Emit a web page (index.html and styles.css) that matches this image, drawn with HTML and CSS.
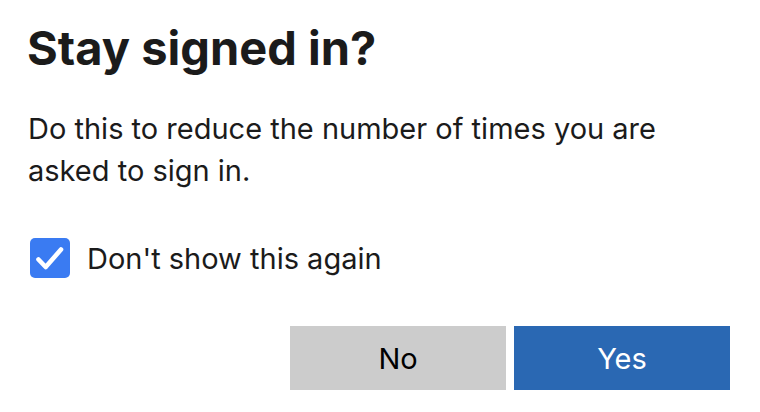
FILE: index.html
```html
<!DOCTYPE html>
<html lang="en">
<head>
<meta charset="utf-8">
<title>Stay signed in?</title>
<link rel="stylesheet" href="styles.css">
</head>
<body>
<main class="dialog">
  <h1 class="title">Stay signed in?</h1>
  <p class="desc">Do this to reduce the number of times you are asked to sign in.</p>
  <label class="check-row">
    <span class="checkbox">
      <svg width="40" height="40" viewBox="0 0 40 40" aria-hidden="true">
        <path d="M8.5 21.5 L15.7 29 L31 11.5" fill="none" stroke="#fff" stroke-width="4.6" stroke-linecap="round" stroke-linejoin="round"/>
      </svg>
    </span>
    <span class="check-label">Don't show this again</span>
  </label>
  <div class="actions">
    <button class="btn btn-no" type="button">No</button>
    <button class="btn btn-yes" type="button">Yes</button>
  </div>
</main>
</body>
</html>
```
FILE: styles.css
```css
html, body {
  margin: 0;
  padding: 0;
  background: #ffffff;
}
body {
  font-family: Inter, "Noto Sans", "Liberation Sans", sans-serif;
  color: #1b1b1b;
}
.dialog {
  width: 760px;
  height: 412px;
  box-sizing: border-box;
  padding: 20px 30px 0 27px;
  display: flex;
  flex-direction: column;
}
.title {
  margin: 0;
  font-size: 47px;
  font-weight: 700;
  line-height: 56px;
}
.desc {
  margin: 32px 0 0 1px;
  font-size: 29px;
  line-height: 42px;
  max-width: 650px;
}
.check-row {
  display: flex;
  align-items: center;
  gap: 17px;
  margin-top: 45px;
  margin-left: 3px;
}
.checkbox {
  width: 40px;
  height: 40px;
  border-radius: 5px;
  background: #3a7bf2;
  display: flex;
}
.check-label {
  font-size: 29px;
  line-height: 40px;
  padding-top: 2px;
}
.actions {
  display: flex;
  justify-content: flex-end;
  gap: 8px;
  margin-top: 47px;
}
.btn {
  width: 216px;
  height: 64px;
  border: 0;
  border-radius: 0;
  font-family: inherit;
  font-size: 29px;
  padding: 0;
}
.btn-no {
  background: #cccccc;
  color: #000000;
}
.btn-yes {
  background: #2a68b3;
  color: #ffffff;
}
```
